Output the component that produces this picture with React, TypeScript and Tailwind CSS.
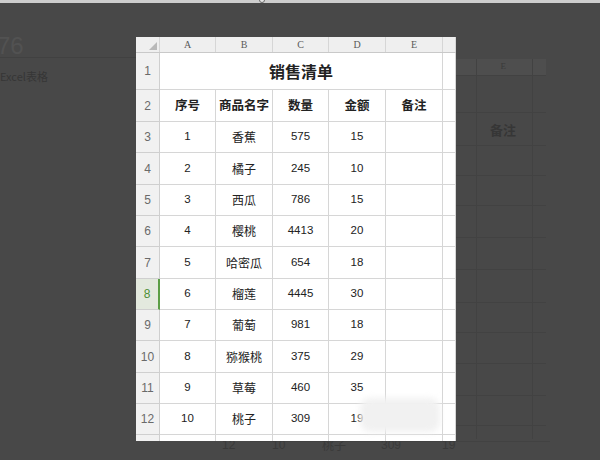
import React from "react";

const rows: { n: number; name: string; qty: string; amt: string; h: string }[] = [
  { n: 1, name: "香蕉", qty: "575", amt: "15", h: "h-[31px]" },
  { n: 2, name: "橘子", qty: "245", amt: "10", h: "h-[32px]" },
  { n: 3, name: "西瓜", qty: "786", amt: "15", h: "h-[31px]" },
  { n: 4, name: "樱桃", qty: "4413", amt: "20", h: "h-[31px]" },
  { n: 5, name: "哈密瓜", qty: "654", amt: "18", h: "h-[32px]" },
  { n: 6, name: "榴莲", qty: "4445", amt: "30", h: "h-[31px]" },
  { n: 7, name: "葡萄", qty: "981", amt: "18", h: "h-[31px]" },
  { n: 8, name: "猕猴桃", qty: "375", amt: "29", h: "h-[32px]" },
  { n: 9, name: "草莓", qty: "460", amt: "35", h: "h-[31px]" },
  { n: 10, name: "桃子", qty: "309", amt: "19", h: "h-[31px]" },
];

const cols = "grid grid-cols-[24px_56px_57px_56px_57px_57px_13px]";
const cjk = "font-['Noto_Sans_CJK_SC',sans-serif]";
const num = "font-['Liberation_Sans','Noto_Sans_CJK_SC',sans-serif]";
const cell = "border-r border-b border-[#d6d6d6] flex items-center justify-center text-[#222]";
const rowHead =
  "border-r border-b border-[#cfcfcf] bg-[#f1f1f1] flex items-center justify-center text-[12px] text-[#6a6a6a] " +
  num;

export default function App() {
  const hLines = [75, 112, 145, 175, 205, 237, 269, 302, 332, 363, 395, 425];
  return (
    <div className="relative w-[600px] h-[460px] bg-[#484848] overflow-hidden">
      {/* top strip */}
      <div className="h-[3px] bg-[#cdcdcd]" />
      <div className="absolute left-[259px] top-[-3px] w-[6px] h-[6px] rounded-full bg-[#e6e6e6] border border-[#6a6a6a]" />

      {/* dimmed backdrop content */}
      <div className={"absolute left-[-3px] top-[28px] text-[24px] text-[#525252] " + num}>76</div>
      <div className="absolute left-0 top-[57px] w-[136px] h-px bg-[#414141]" />
      <div className={"absolute left-0 top-[68px] text-[11px] text-[#363636] " + cjk}>Excel表格</div>

      <div className="absolute left-[456px] top-[59px] w-[90px] h-[16px] bg-[#4e4e4e] flex items-center justify-end pr-[40px] text-[9px] text-[#3a3a3a] font-['Liberation_Serif',serif]">
        E
      </div>
      <div className="absolute left-[476px] top-[59px] w-px h-[380px] bg-[#424242]" />
      <div className="absolute left-[532px] top-[59px] w-px h-[380px] bg-[#424242]" />
      {hLines.map((y) => (
        <div key={y} className="absolute left-[456px] w-[90px] h-px bg-[#424242]" style={{ top: y }} />
      ))}
      <div className={"absolute left-[490px] top-[120px] text-[13px] font-bold text-[#363636] " + cjk}>备注</div>

      <div className="absolute left-[250px] top-[441px] w-[300px] h-px bg-[#424242]" />
      <div className={"absolute left-[222px] top-[436px] text-[12px] text-[#3a3a3a] " + num}>12</div>
      <div className={"absolute left-[272px] top-[436px] text-[12px] text-[#3a3a3a] " + num}>10</div>
      <div className={"absolute left-[322px] top-[436px] text-[12px] text-[#3a3a3a] " + cjk}>桃子</div>
      <div className={"absolute left-[381px] top-[436px] text-[12px] text-[#3a3a3a] " + num}>309</div>
      <div className={"absolute left-[442px] top-[436px] text-[12px] text-[#3a3a3a] " + num}>19</div>

      {/* spreadsheet panel */}
      <div className="absolute left-[136px] top-[37px] w-[320px] h-[404px] bg-white overflow-hidden">
        {/* column header */}
        <div className={cols + " h-[16px] bg-[#efefef] border-b border-[#c9c9c9]"}>
          <div className="border-r border-[#d6d6d6] relative">
            <svg className="absolute right-[2px] bottom-[2px]" width="8" height="8" viewBox="0 0 8 8">
              <polygon points="8,0 8,8 0,8" fill="#b9b9b9" />
            </svg>
          </div>
          {["A", "B", "C", "D", "E", ""].map((c, i) => (
            <div
              key={i}
              className="border-r border-[#d6d6d6] flex items-center justify-center text-[10px] text-[#5a5a5a] font-['Liberation_Serif',serif]"
            >
              {c}
            </div>
          ))}
        </div>

        {/* row 1 title */}
        <div className={cols + " h-[37px]"}>
          <div className={rowHead}>1</div>
          <div className={cell + " col-span-5 text-[16px] font-bold " + cjk}>销售清单</div>
          <div className={cell} />
        </div>

        {/* row 2 headers */}
        <div className={cols + " h-[32px]"}>
          <div className={rowHead}>2</div>
          {["序号", "商品名字", "数量", "金额", "备注"].map((t) => (
            <div key={t} className={cell + " text-[12.5px] font-bold " + cjk}>
              {t}
            </div>
          ))}
          <div className={cell} />
        </div>

        {rows.map((r, i) => {
          const sel = i + 3 === 8;
          return (
            <div key={r.n} className={cols + " " + r.h}>
              <div
                className={
                  sel
                    ? "border-r-2 border-b border-r-[#5b9e45] border-b-[#cfcfcf] bg-[#e3e9de] flex items-center justify-center text-[12px] text-[#4e8f36] " +
                      num
                    : rowHead
                }
              >
                {i + 3}
              </div>
              <div className={cell + " text-[11.5px] " + num}>{r.n}</div>
              <div className={cell + " text-[12px] " + cjk}>{r.name}</div>
              <div className={cell + " text-[11.5px] " + num}>{r.qty}</div>
              <div className={cell + " text-[11.5px] " + num}>{r.amt}</div>
              <div className={cell} />
              <div className={cell} />
            </div>
          );
        })}

        {/* row 13 partial */}
        <div className={cols + " h-[12px]"}>
          <div className={rowHead + " items-start pt-[3px]"}>13</div>
          <div className={cell} />
          <div className={cell} />
          <div className={cell} />
          <div className={cell} />
          <div className={cell} />
          <div className={cell} />
        </div>

        {/* blurred patch */}
        <div className="absolute left-[224px] top-[361px] w-[80px] h-[34px] bg-[#f1f1f1] blur-[3px] rounded-[10px]" />
      </div>
    </div>
  );
}
